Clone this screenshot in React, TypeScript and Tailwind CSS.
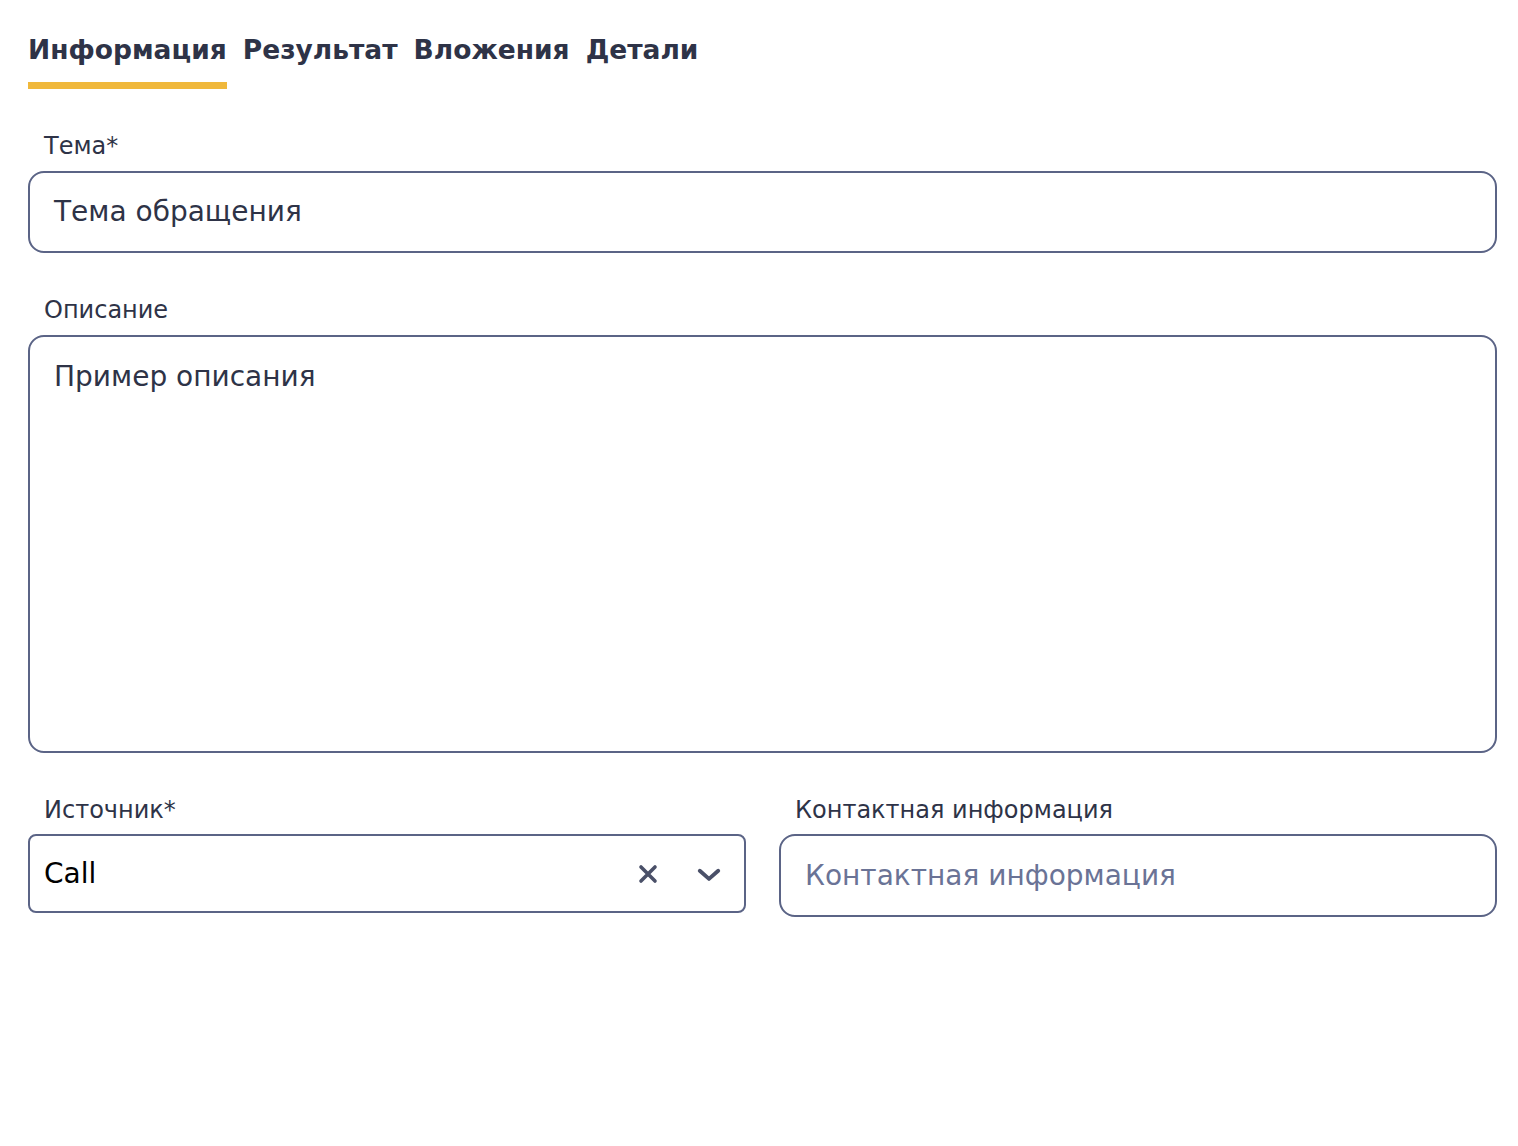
import React from "react";

const tabs = ["Информация", "Результат", "Вложения", "Детали"];

const Label = ({ children }: { children: React.ReactNode }) => (
  <div className="pl-4 text-[24px] leading-[28px] text-[#2e3347]">{children}</div>
);

const App = () => {
  return (
    <div
      className="w-full min-h-[1146px] bg-white pl-[28px] pr-[21px] pt-[32px] text-[#2e3347]"
      style={{ fontFamily: '"DejaVu Sans", "Noto Sans", sans-serif' }}
    >
      {/* tabs */}
      <div className="flex gap-[16px]">
        {tabs.map((t, i) => (
          <div key={t} className="flex flex-col">
            <span className="text-[26.5px] leading-[36px] font-bold text-[#2e3347]">{t}</span>
            <span className={`mt-[14px] h-[7px] ${i === 0 ? "bg-[#f0b83b]" : "bg-transparent"}`} />
          </div>
        ))}
      </div>

      <div className="mt-[43px] flex flex-col gap-[11px]">
        <Label>Тема*</Label>
        <div className="h-[82px] rounded-[16px] border-2 border-[#5b6486] pl-6 flex items-center text-[28px] text-[#2e3347]">
          Тема обращения
        </div>
      </div>

      <div className="mt-[43px] flex flex-col gap-[11px]">
        <Label>Описание</Label>
        <div className="h-[418px] rounded-[16px] border-2 border-[#5b6486] pl-6 pt-[22px] text-[28px] leading-[36px] text-[#2e3347]">
          Пример описания
        </div>
      </div>

      <div className="mt-[43px] grid grid-cols-2 gap-[33px]">
        <div className="flex flex-col gap-[10px]">
          <Label>Источник*</Label>
          <div className="h-[79px] rounded-[8px] border-2 border-[#5b6486] pl-[14px] pr-[22px] flex items-center">
            <span className="flex-1 text-[28px] text-black">Call</span>
            <svg width="24" height="24" viewBox="0 0 24 24" className="mr-[36px]" fill="none" stroke="#4a5068" strokeWidth="3.6" strokeLinecap="round">
              <path d="M5 5L19 19M19 5L5 19" />
            </svg>
            <svg width="26" height="26" viewBox="0 0 24 24" fill="none" stroke="#4a5068" strokeWidth="3.6" strokeLinecap="round" strokeLinejoin="round">
              <path d="M3.5 9l8.5 7.5 8.5-7.5" />
            </svg>
          </div>
        </div>
        <div className="flex flex-col gap-[10px]">
          <Label>Контактная информация</Label>
          <div className="h-[83px] rounded-[16px] border-2 border-[#5b6486] pl-6 flex items-center text-[28px] text-[#6a7396]">
            Контактная информация
          </div>
        </div>
      </div>
    </div>
  );
};

export default App;
